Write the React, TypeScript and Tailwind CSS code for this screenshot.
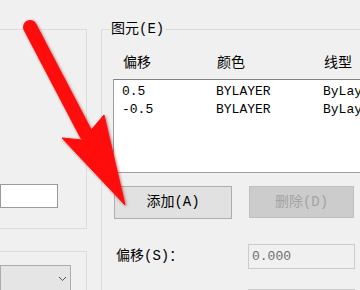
const mono = "font-['Liberation_Mono','Noto_Sans_CJK_SC',monospace]";

function Arrow() {
  return (
    <svg
      className="absolute left-0 top-0 pointer-events-none"
      width={360}
      height={290}
      viewBox="0 0 360 290"
    >
      <defs>
        <filter id="glow" x="-20%" y="-20%" width="140%" height="140%">
          <feDropShadow dx="1" dy="1" stdDeviation="1.6" floodColor="#7a0000" floodOpacity="0.55" />
        </filter>
      </defs>
      <g filter="url(#glow)" fill="#ff0f0f" stroke="#ff0f0f">
        <line x1={30} y1={27} x2={86} y2={134} strokeWidth={14} strokeLinecap="round" />
        <polygon strokeWidth={1} strokeLinejoin="round" points="125,205 104,115 92,129 82,140 62,138" />
      </g>
    </svg>
  );
}

export default function App() {
  return (
    <div className={`relative w-[360px] h-[290px] overflow-hidden bg-[#f0f0f0] text-black ${mono}`}>
      <div className="flex">
        {/* left column */}
        <div className="w-[87px] shrink-0 pt-[29px]">
          <div className="h-[200px] border-t border-r border-b border-[#dcdcdc]">
            <div className="mt-[154px] w-[58px] h-[24px] bg-white border border-[#9a9a9a]" />
          </div>
          <div className="mt-[22px] h-[60px] border-t border-r border-[#dcdcdc] pt-[13px]">
            <div className="relative w-[71px] h-[30px] bg-[#e5e5e5] border border-[#acacac]">
              <svg className="absolute left-[57px] top-[10px]" width={9} height={6} viewBox="0 0 9 6">
                <path d="M1 1 L4.5 4.5 L8 1" fill="none" stroke="#555" strokeWidth={1} />
              </svg>
            </div>
          </div>
        </div>

        {/* right column */}
        <div className="ml-[14px] flex-1 pt-[20px]">
          <fieldset className="border-t border-l border-[#dcdcdc] h-[300px]">
            <legend className="ml-[8px] px-[1px] text-[14px] leading-[18px]">图元(E)</legend>

            <div className="ml-[11px] mt-[9px] h-[32px] grid grid-cols-[94px_107px_1fr] items-center text-[14px] whitespace-nowrap">
              <span className="pl-[10px]">偏移</span>
              <span className="pl-[10px]">颜色</span>
              <span className="pl-[10px]">线型</span>
            </div>

            <div className="ml-[11px] h-[94px] bg-white border-l border-b border-t border-[#a0a0a0] border-t-[#828282] pt-[3px] text-[13px] leading-[18px] whitespace-nowrap">
              {[
                ['0.5', 'BYLAYER', 'ByLayer'],
                ['-0.5', 'BYLAYER', 'ByLayer'],
              ].map((r) => (
                <div key={r[0]} className="grid grid-cols-[94px_107px_1fr]">
                  <span className="pl-[8px]">{r[0]}</span>
                  <span className="pl-[8px]">{r[1]}</span>
                  <span className="pl-[8px]">{r[2]}</span>
                </div>
              ))}
            </div>

            <div className="flex ml-[12px] mt-[13px] gap-[17px] text-[14px]">
              <button className="w-[118px] h-[33px] bg-[#e1e1e1] border border-[#adadad]">添加(A)</button>
              <button disabled className="w-[105px] h-[32px] bg-[#cccccc] border border-[#bfbfbf] text-[#a3a3a3]">
                删除(D)
              </button>
            </div>

            <div className="flex items-center ml-[14px] mt-[25px] text-[14px]">
              <span className="w-[132px]">偏移(S)：</span>
              <div className="w-[107px] h-[25px] border border-[#cccccc] bg-[#f0f0f0] pl-[3px] flex items-center text-[13px] text-[#6d6d6d]">
                0.000
              </div>
            </div>
            <div className="ml-[146px] mt-[20px] w-[107px] h-[25px] border border-[#cccccc] bg-[#f0f0f0]" />
          </fieldset>
        </div>
      </div>
      <Arrow />
    </div>
  );
}
